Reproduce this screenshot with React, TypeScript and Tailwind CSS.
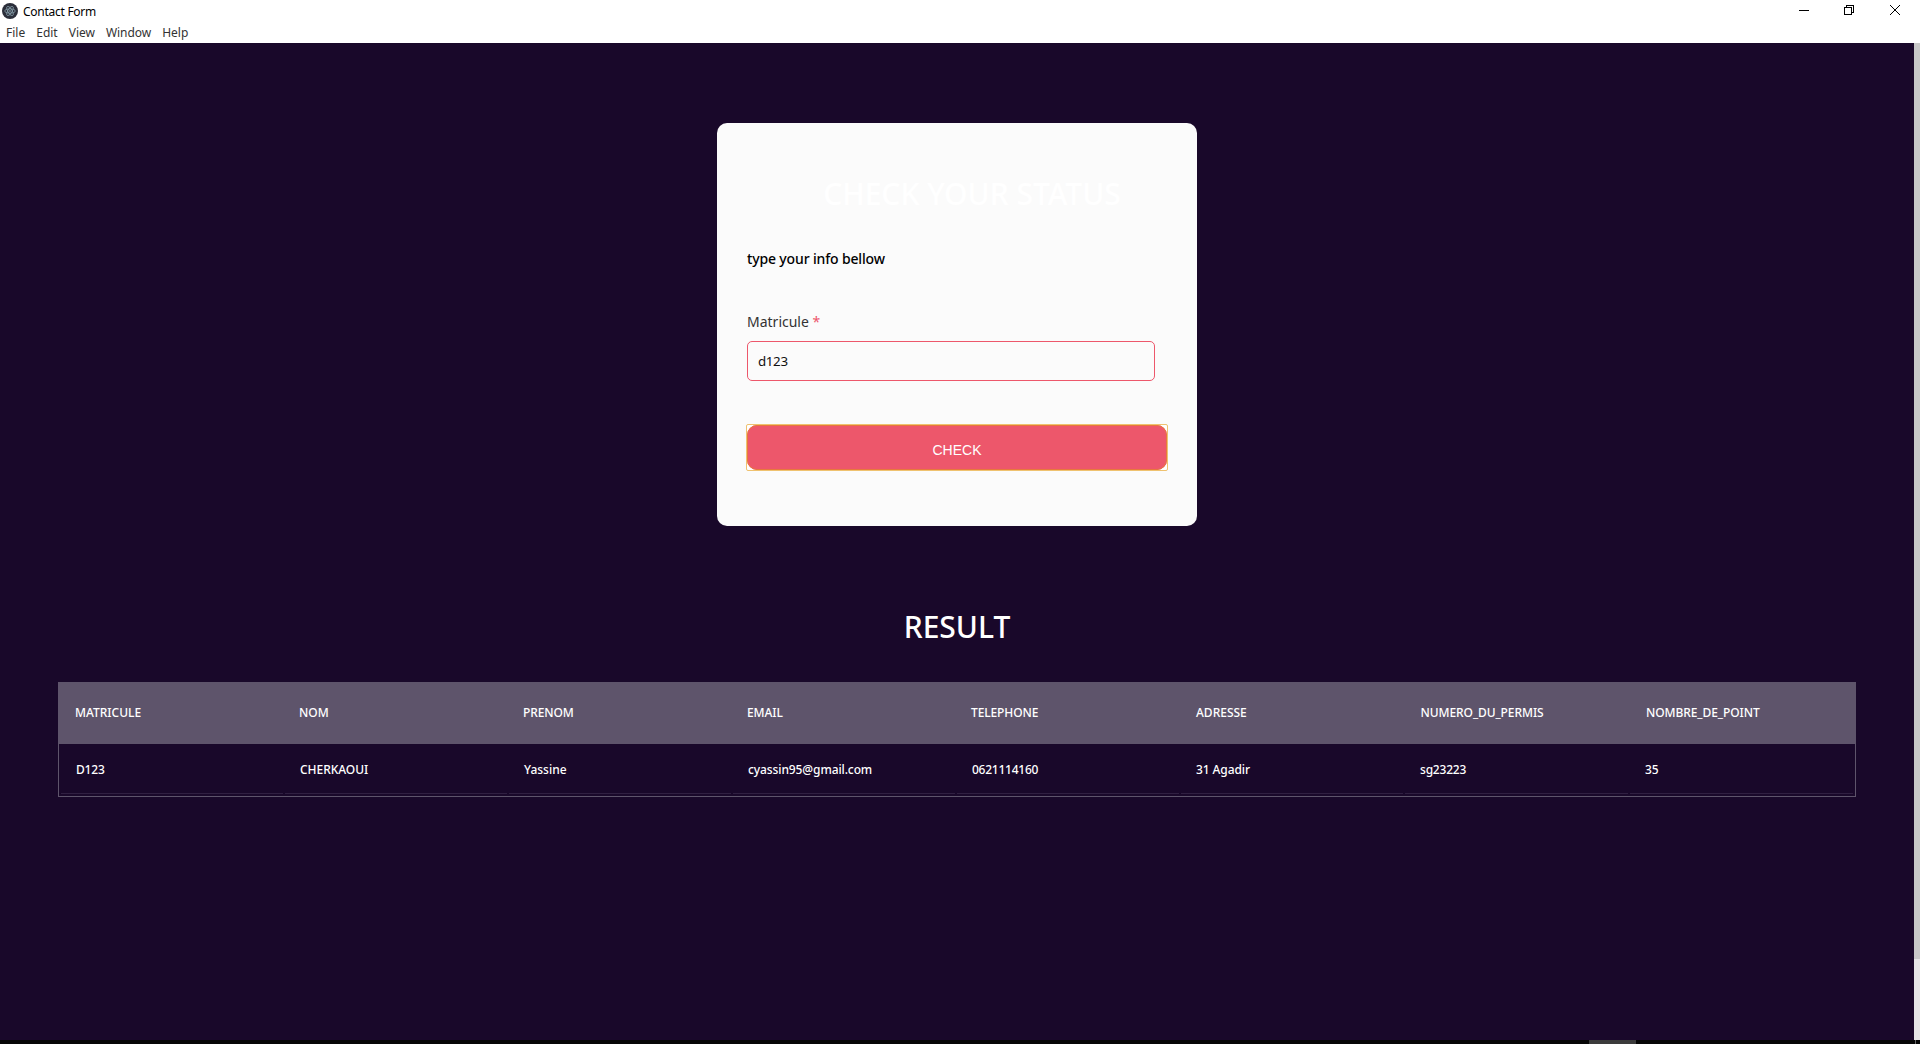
import React from "react";

const columns = [
  { head: "MATRICULE", value: "D123", headClass: "", valueClass: "tracking-[-0.15px]" },
  { head: "NOM", value: "CHERKAOUI", headClass: "", valueClass: "tracking-[-0.05px]" },
  { head: "PRENOM", value: "Yassine", headClass: "tracking-[-0.1px]", valueClass: "" },
  { head: "EMAIL", value: "cyassin95@gmail.com", headClass: "tracking-[-0.1px]", valueClass: "tracking-[-0.1px]" },
  { head: "TELEPHONE", value: "0621114160", headClass: "tracking-[-0.1px]", valueClass: "tracking-[-0.25px]" },
  { head: "ADRESSE", value: "31 Agadir", headClass: "ml-px", valueClass: "tracking-[-0.1px]" },
  { head: "NUMERO_DU_PERMIS", value: "sg23223", headClass: "tracking-[-0.08px]", valueClass: "tracking-[-0.2px]" },
  { head: "NOMBRE_DE_POINT", value: "35", headClass: "tracking-[-0.08px]", valueClass: "tracking-[-0.2px]" },
];

function ElectronIcon() {
  return (
    <svg width="16" height="16" viewBox="0 0 16 16" fill="none">
      <circle cx="8" cy="8" r="8" fill="#2b2e3a" />
      <g stroke="#8fa9b4" strokeWidth="0.7">
        <ellipse cx="8" cy="8" rx="5.2" ry="2.1" />
        <ellipse cx="8" cy="8" rx="5.2" ry="2.1" transform="rotate(60 8 8)" />
        <ellipse cx="8" cy="8" rx="5.2" ry="2.1" transform="rotate(120 8 8)" />
      </g>
      <circle cx="8" cy="8" r="0.8" fill="#a5c4cd" />
    </svg>
  );
}

function TitleBar() {
  return (
    <header className="h-[43px] shrink-0 bg-white text-black">
      <div className="flex h-6 justify-between">
        <div className="flex items-start pt-[3px] pl-[2px]">
          <ElectronIcon />
          <span className="ml-[5px] text-[12px] leading-[17px] tracking-[-0.27px]">Contact Form</span>
        </div>
        <div className="flex pt-[5px] pr-5">
          <svg width="10" height="10" className="mr-[35px]" shapeRendering="crispEdges">
            <rect y="5" width="10" height="1" fill="#000" />
          </svg>
          <svg width="10" height="10" className="mr-9" fill="none" stroke="#000" shapeRendering="crispEdges">
            <path d="M.5 2.5h7v7h-7zM2.5 2.5v-2h7v7h-2" />
          </svg>
          <svg width="10" height="10" fill="none" stroke="#000">
            <path d="M0 0l10 10M10 0L0 10" />
          </svg>
        </div>
      </div>
      <nav className="flex gap-[11px] pl-[6px] text-[12px] leading-[18px] text-[#333]">
        <span>File</span>
        <span>Edit</span>
        <span>View</span>
        <span className="tracking-[-0.05px]">Window</span>
        <span>Help</span>
      </nav>
    </header>
  );
}

function StatusCard() {
  return (
    <section className="mx-auto h-[403px] w-[480px] rounded-[10px] bg-[#fbfbfb] px-[30px] pt-12">
      <h1 className="pl-[30px] text-center text-[30px] leading-[45px] font-medium text-white">CHECK YOUR STATUS</h1>
      <p className="mt-8 text-[14px] leading-[22px] font-medium tracking-[-0.15px] text-black">type your info bellow</p>
      <label className="mt-[41px] block text-[14px] leading-[22px] text-[#333]">
        Matricule <span className="text-[#ed576b]">*</span>
      </label>
      <div className="mt-2 h-10 w-[408px] rounded-[5px] border border-[#ed576b] pl-[10px] text-[13.33px] leading-[38px] tracking-[-0.35px] text-[#111]">
        d123
      </div>
      <div className="mt-[43px] -ml-px h-[47px] w-[422px] rounded-[2px] border border-[#efc26f] bg-white">
        <div className="h-full rounded-[10px] bg-[#ed576b] pt-[3px] text-center font-['Liberation_Sans',sans-serif] text-[14px] leading-[44px] text-white outline outline-1 -outline-offset-1 outline-[#e8783c]">
          CHECK
        </div>
      </div>
    </section>
  );
}

function ResultTable() {
  return (
    <section className="mx-[58px] text-[12px] font-medium text-white">
      <div className="grid h-[62px] grid-cols-[repeat(5,224px)_225.5px_225.5px_1fr] items-center bg-[#5e546b]">
        {columns.map((c) => (
          <div key={c.head} className="pl-[17px]">
            <span className={c.headClass}>{c.head}</span>
          </div>
        ))}
      </div>
      <div className="grid h-[53px] grid-cols-[repeat(6,222px)_223px_223px] gap-x-[2px] border border-t-0 border-[#5e546b] px-[2px] pb-[2px]">
        {columns.map((c) => (
          <div key={c.head} className="h-[50px] border-b border-[#301f41] pl-[15px] leading-[52px]">
            <span className={c.valueClass}>{c.value}</span>
          </div>
        ))}
      </div>
    </section>
  );
}

export default function App() {
  return (
    <div className="flex h-[1044px] w-[1920px] flex-col overflow-hidden bg-[#19082a] font-['Noto_Sans',sans-serif]">
      <TitleBar />
      <div className="flex min-h-0 flex-1">
        <main className="w-[1914px] pt-20">
          <StatusCard />
          <h2 className="mt-[78px] mb-[33px] text-center text-[30px] leading-[45px] font-medium text-white">RESULT</h2>
          <ResultTable />
        </main>
        <div className="w-[6px] bg-[#e6e6e6]">
          <div className="h-[916px] bg-[#c8c8c8]" />
        </div>
      </div>
      <footer className="flex h-1 shrink-0 bg-[#060606] pl-[1589px]">
        <div className="w-[47px] bg-[#3b3b3b]" />
        <div className="ml-[279px] w-px bg-[#666]" />
      </footer>
    </div>
  );
}
